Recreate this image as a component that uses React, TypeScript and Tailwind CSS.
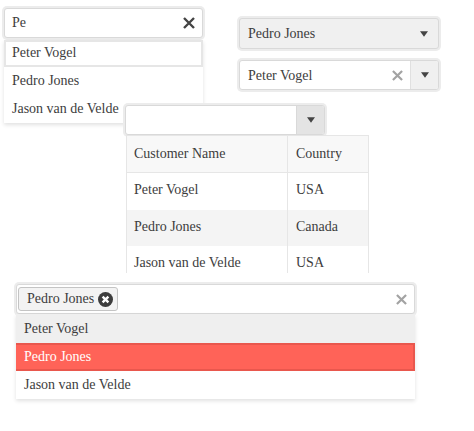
import React from 'react';

const CloseIcon = ({ className }: { className: string }) => (
  <svg viewBox="0 0 12 12" className={className} fill="none" stroke="currentColor" strokeWidth="2.4">
    <path d="M1 1 11 11M11 1 1 11" />
  </svg>
);

const Caret = () => (
  <svg viewBox="0 0 10 7" className="w-[8px] h-[6px] text-[#444]" fill="currentColor">
    <path d="M0 0H10L5 7Z" />
  </svg>
);

const Field = ({ children, className = '' }: { children: React.ReactNode; className?: string }) => (
  <div className={`flex items-stretch border border-[#d9d9d9] rounded-[3px] ring-2 ring-[#ececec] overflow-hidden ${className}`}>
    {children}
  </div>
);

const rows = [
  { name: 'Peter Vogel', country: 'USA', row: 'h-[37px] bg-white' },
  { name: 'Pedro Jones', country: 'Canada', row: 'h-[36px] bg-[#f4f4f4]' },
  { name: 'Jason van de Velde', country: 'USA', row: 'h-[36px] bg-white' },
];

export default function App() {
  return (
    <div className="relative w-[474px] h-[431px] overflow-hidden bg-white text-[#3d3d3d] text-[14px] leading-[20px] font-['Liberation_Serif',serif]">
      <div className="flex items-start pl-[4px] pt-[8px]">
        {/* autocomplete with open list */}
        <div className="w-[199px] shrink-0">
          <Field className="h-[30px] bg-white">
            <div className="flex-1 flex items-center pl-[7px]">Pe</div>
            <div className="flex items-center pr-[7px]">
              <CloseIcon className="w-[12px] h-[12px] text-[#444]" />
            </div>
          </Field>
          <div className="mt-[2px] bg-white shadow-[0_2px_4px_rgba(0,0,0,0.12)]">
            <div className="h-[27px] flex items-center pl-[7px] pb-[2px] border-2 border-[#e6e6e6]">
              <span className="-ml-[1px]">Peter Vogel</span>
            </div>
            <div className="h-[28px] flex items-center pl-[8px]">Pedro Jones</div>
            <div className="h-[28px] flex items-center pl-[8px]">Jason van de Velde</div>
          </div>
        </div>

        {/* drop down list and combo box */}
        <div className="w-[200px] ml-[36px] mt-[10px] shrink-0">
          <Field className="h-[31px] bg-[#f0f0f0]">
            <div className="flex-1 flex items-center pl-[8px]">Pedro Jones</div>
            <div className="flex items-center pr-[10px]">
              <Caret />
            </div>
          </Field>
          <Field className="h-[30px] mt-[11px] bg-white">
            <div className="flex-1 flex items-center pl-[8px] pt-[2px]">Peter Vogel</div>
            <div className="flex items-center pr-[7px]">
              <CloseIcon className="w-[11px] h-[11px] text-[#a3a3a3]" />
            </div>
            <div className="w-[28px] flex items-center justify-center border-l border-[#e0e0e0] bg-[#f0f0f0]">
              <Caret />
            </div>
          </Field>
        </div>
      </div>

      {/* multi column combo box, sits over the first list */}
      <div className="absolute left-[123px] top-[102px] w-[246px] h-[171px] overflow-hidden pt-[3px] pl-[2px]">
        <Field className="w-[200px] h-[30px] bg-white">
          <div className="flex-1" />
          <div className="w-[28px] flex items-center justify-center border-l border-[#d9d9d9] bg-[#e4e4e4]">
            <Caret />
          </div>
        </Field>
        <table className="relative w-[243px] ml-[1px] border-collapse table-fixed bg-white">
          <thead>
            <tr className="h-[37px] bg-[#f8f8f8]">
              <th className="w-[161px] pl-[7px] font-normal text-left border border-[#e6e6e6]">Customer Name</th>
              <th className="pl-[8px] font-normal text-left border border-[#e6e6e6]">Country</th>
            </tr>
          </thead>
          <tbody>
            {rows.map((item) => (
              <tr key={item.name} className={item.row}>
                <td className="pl-[7px] pb-[2px] border-x border-[#e6e6e6]">{item.name}</td>
                <td className="pl-[8px] pb-[2px] border-x border-[#e6e6e6]">{item.country}</td>
              </tr>
            ))}
          </tbody>
        </table>
      </div>

      {/* multi select */}
      <div className="w-[399px] ml-[16px] mt-[161px]">
        <Field className="h-[30px] bg-white">
          <div className="flex-1 flex items-center pl-[1px]">
            <div className="h-[24px] flex items-center gap-[4px] pl-[8px] pr-[4px] bg-[#f3f3f3] border border-[#c4c4c4] rounded-[3px]">
              <span>Pedro Jones</span>
              <svg viewBox="0 0 14 14" className="w-[15px] h-[15px]">
                <circle cx="7" cy="7" r="7" fill="#3d3d3d" />
                <path d="M4.3 4.3 9.7 9.7M9.7 4.3 4.3 9.7" stroke="#fff" strokeWidth="2.2" />
              </svg>
            </div>
          </div>
          <div className="flex items-center pr-[7px]">
            <CloseIcon className="w-[11px] h-[11px] text-[#a3a3a3]" />
          </div>
        </Field>
        <div className="bg-white shadow-[0_2px_4px_rgba(0,0,0,0.12)]">
          <div className="h-[29px] flex items-center pl-[8px] bg-[#efefef]">Peter Vogel</div>
          <div className="h-[28px] flex items-center pl-[8px] bg-[#ff6358] text-white border-y-2 border-r-2 border-[#e9574d]">Pedro Jones</div>
          <div className="h-[28px] flex items-center pl-[8px]">Jason van de Velde</div>
        </div>
      </div>
    </div>
  );
}
